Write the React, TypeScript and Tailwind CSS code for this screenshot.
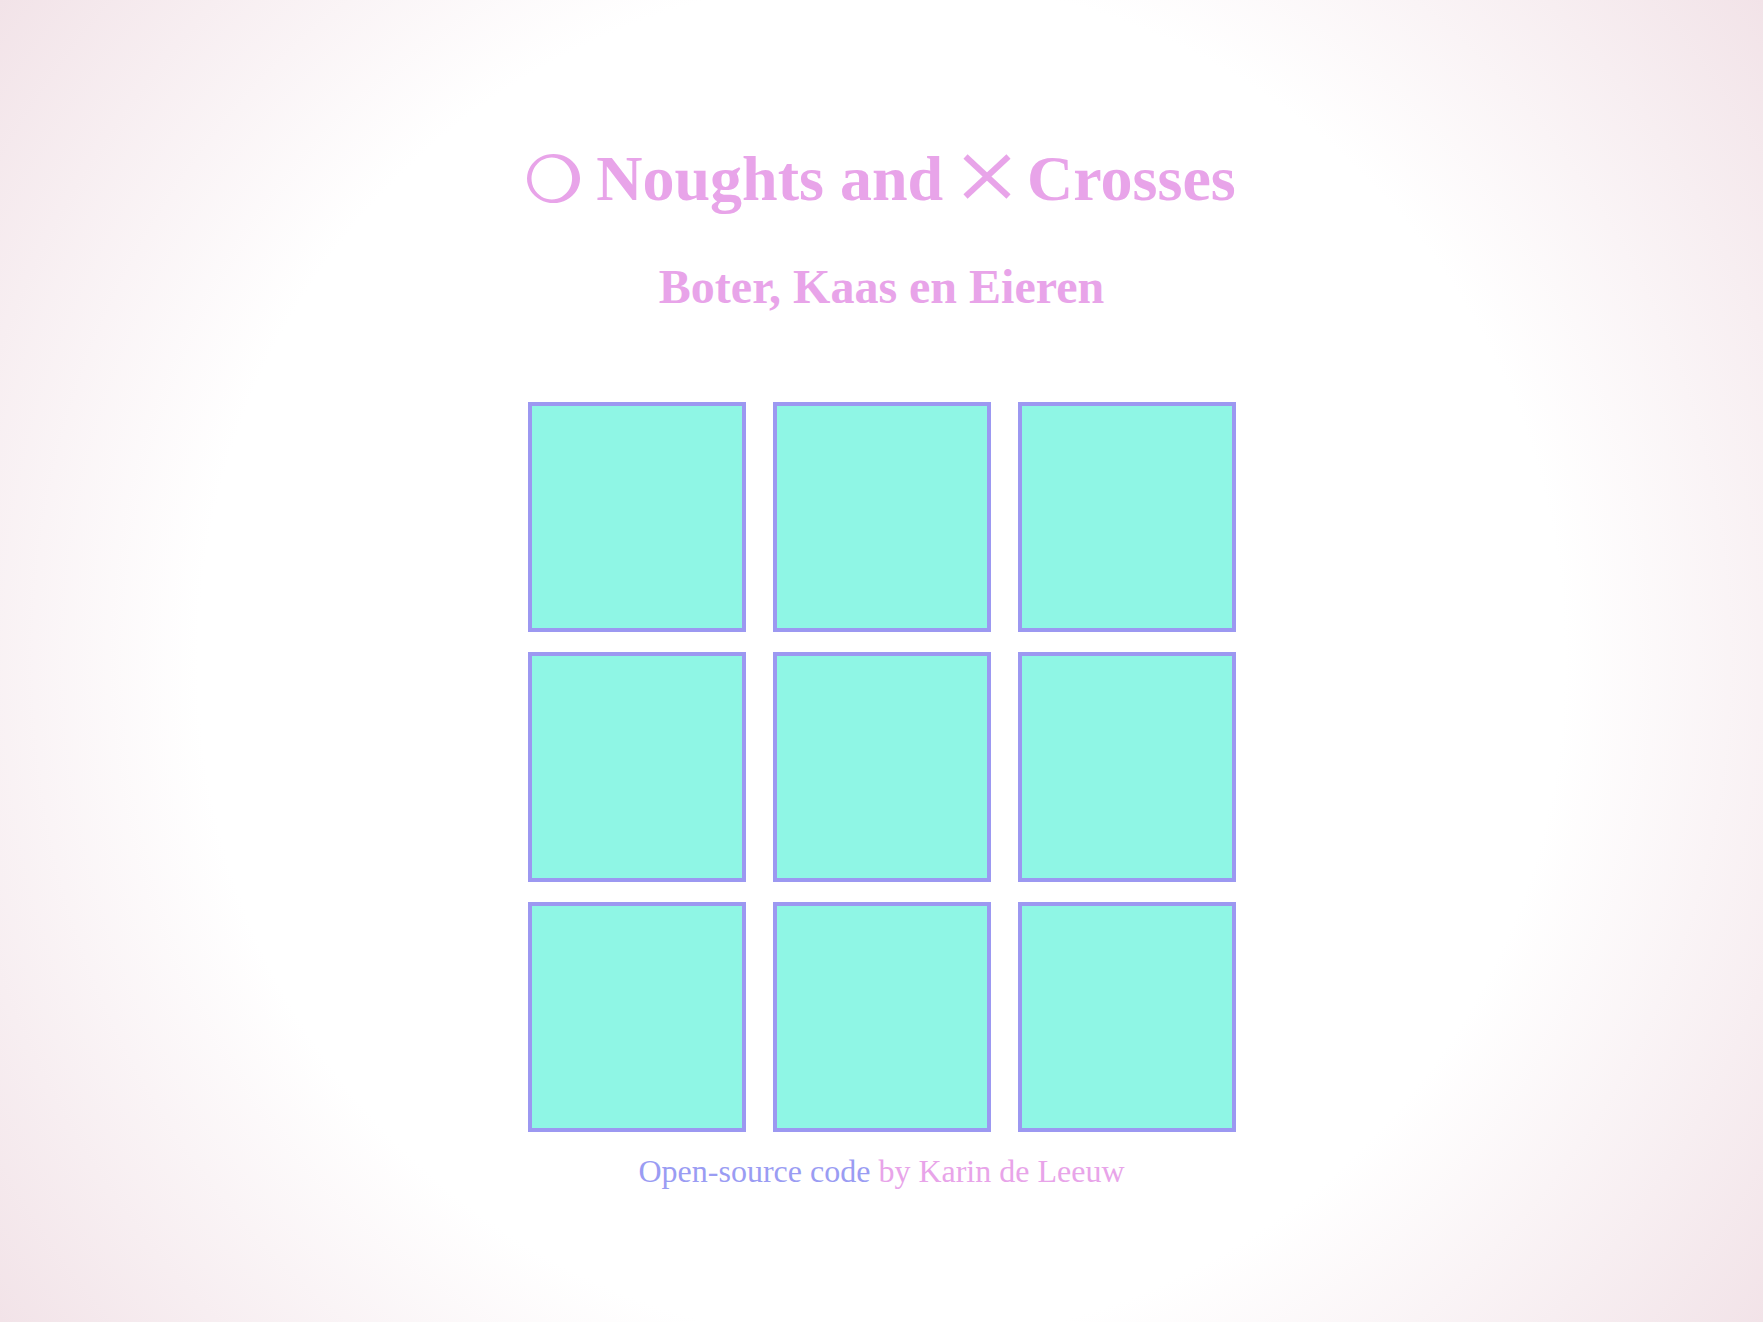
export default function App() {
  const cells = Array.from({ length: 9 });

  return (
    <div className="min-h-screen w-full bg-[radial-gradient(circle_at_center,#ffffff_62%,#f2e3e8_100%)] font-['Liberation_Serif','Times_New_Roman',serif]">
      <div className="flex flex-col items-center pt-[139px]">
        <h1 className="text-[64px] leading-[80px] font-bold text-[#e8a4e9]">
          <svg
            width="53"
            height="49"
            viewBox="0 0 53 49"
            className="inline-block align-baseline mb-[-3px]"
            aria-label="○"
          >
            <path
              fillRule="evenodd"
              fill="currentColor"
              d="M26.5 0a26.5 24.5 0 1 0 0.001 0ZM24.8 3.5a20.3 21 0 1 0 0.001 0Z"
            />
          </svg>{' '}
          Noughts and{' '}
          <svg
            width="48"
            height="45"
            viewBox="0 0 48 45"
            className="inline-block align-baseline mb-[1px] ml-[4px]"
            aria-label="✕"
          >
            <line x1="2.5" y1="2.5" x2="45.5" y2="42.5" stroke="currentColor" strokeWidth="6" />
            <line x1="45.5" y1="2.5" x2="2.5" y2="42.5" stroke="currentColor" strokeWidth="6" />
          </svg>{' '}
          Crosses
        </h1>
        <h2 className="mt-[40px] text-[48px] leading-[56px] font-bold text-[#e8a4e9]">
          Boter, Kaas en Eieren
        </h2>

        <div className="mt-[87px] grid grid-cols-[218px_218px_218px] auto-rows-[230px] gap-x-[27px] gap-y-[20px]">
          {cells.map((_, i) => (
            <button
              key={i}
              className="bg-[#8ff6e5] border-4 border-[#9c98f1]"
            />
          ))}
        </div>

        <p className="mt-[19px] text-[32px] leading-[40px]">
          <span className="text-[#9a9cf3]">Open-source code</span>{' '}
          <span className="text-[#e8a4e9]">by Karin de Leeuw</span>
        </p>
      </div>
    </div>
  );
}
